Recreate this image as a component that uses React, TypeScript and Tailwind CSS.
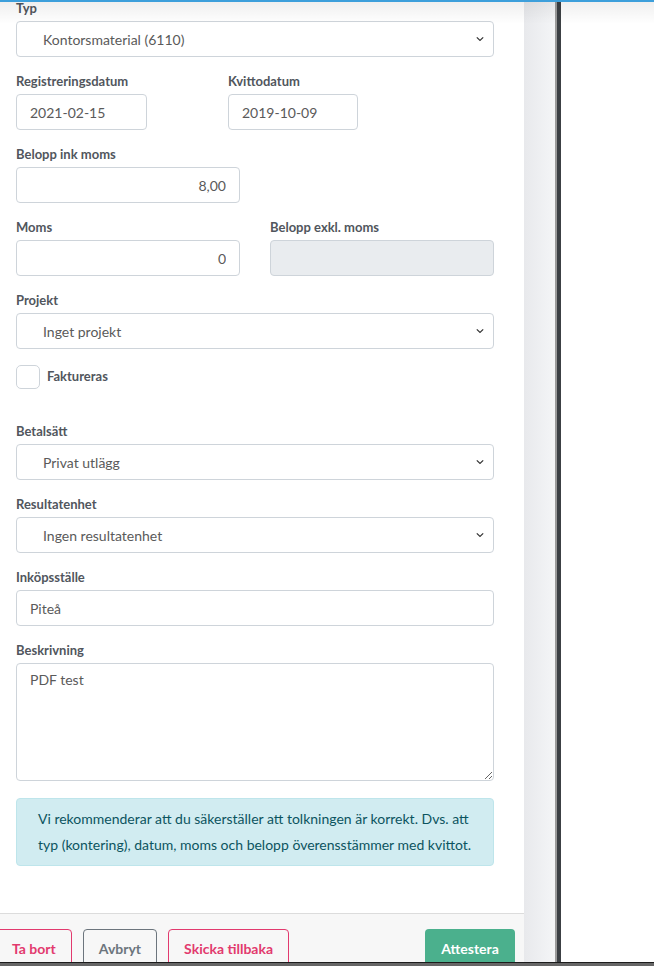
import { useState } from "react";

const FIELD =
  "h-[36px] w-full rounded-[4px] border border-[#ced4da] bg-white text-[14px] text-[#5a5a5a] outline-none";

function Label({ children }: { children: React.ReactNode }) {
  return (
    <div className="mb-[4px] text-[13px] font-bold leading-[17px] text-[#51565d]">
      {children}
    </div>
  );
}

function Chevron() {
  return (
    <svg
      width="8"
      height="5"
      viewBox="0 0 8 5"
      className="pointer-events-none absolute right-[10px] top-1/2 -translate-y-1/2"
    >
      <path d="M0.8 0.8 L4 4 L7.2 0.8" fill="none" stroke="#333" strokeWidth="1.2" />
    </svg>
  );
}

function Select({ value }: { value: string }) {
  return (
    <div className="relative">
      <select
        defaultValue={value}
        className={`${FIELD} appearance-none pl-[26px] pr-[30px]`}
      >
        <option>{value}</option>
      </select>
      <Chevron />
    </div>
  );
}

function Group({
  label,
  children,
  className = "mb-[16px]",
}: {
  label: string;
  children: React.ReactNode;
  className?: string;
}) {
  return (
    <div className={className}>
      <Label>{label}</Label>
      {children}
    </div>
  );
}

export default function App() {
  const [billed, setBilled] = useState(false);

  return (
    <div className="relative flex h-[966px] w-[654px] flex-col overflow-hidden bg-white font-['Lato',sans-serif]">
      <div className="flex min-h-0 flex-1">
        {/* left panel */}
        <div className="flex w-[524px] flex-col bg-white">
          <div className="flex-1 overflow-hidden px-[16px]">
            <div className="w-[478px]">
              <Group label="Typ">
                <Select value="Kontorsmaterial (6110)" />
              </Group>

              <div className="flex">
                <Group label="Registreringsdatum" className="mb-[16px] w-[212px]">
                  <input
                    defaultValue="2021-02-15"
                    className={`${FIELD} !w-[131px] px-[13px]`}
                  />
                </Group>
                <Group label="Kvittodatum" className="mb-[16px]">
                  <input
                    defaultValue="2019-10-09"
                    className={`${FIELD} !w-[130px] px-[13px]`}
                  />
                </Group>
              </div>

              <Group label="Belopp ink moms" className="mb-[16px] w-[224px]">
                <input defaultValue="8,00" className={`${FIELD} px-[13px] text-right`} />
              </Group>

              <div className="flex gap-[30px]">
                <Group label="Moms" className="mb-[16px] w-[224px]">
                  <input defaultValue="0" className={`${FIELD} px-[13px] text-right`} />
                </Group>
                <Group label="Belopp exkl. moms" className="mb-[16px] w-[224px]">
                  <input disabled className={`${FIELD} !bg-[#e9ecef] px-[13px]`} />
                </Group>
              </div>

              <Group label="Projekt">
                <Select value="Inget projekt" />
              </Group>

              <label className="mb-[34px] flex h-[24px] cursor-pointer items-center gap-[7px]">
                <button
                  type="button"
                  onClick={() => setBilled(!billed)}
                  className="h-[24px] w-[24px] rounded-[5px] border border-[#ced4da] bg-white"
                >
                  {billed && (
                    <svg viewBox="0 0 24 24" className="h-full w-full">
                      <path d="M6 12l4 4 8-8" fill="none" stroke="#4bb08d" strokeWidth="2.5" />
                    </svg>
                  )}
                </button>
                <span className="text-[13px] font-bold text-[#51565d]">Faktureras</span>
              </label>

              <Group label="Betalsätt">
                <Select value="Privat utlägg" />
              </Group>

              <Group label="Resultatenhet">
                <Select value="Ingen resultatenhet" />
              </Group>

              <Group label="Inköpsställe">
                <input defaultValue="Piteå" className={`${FIELD} px-[13px]`} />
              </Group>

              <Group label="Beskrivning" className="mb-[17px]">
                <textarea
                  defaultValue="PDF test"
                  className="block h-[118px] w-full rounded-[4px] border border-[#ced4da] bg-white px-[13px] py-[6px] text-[14px] leading-[20px] text-[#5a5a5a] outline-none"
                />
              </Group>

              <div className="rounded-[4px] border border-[#bee5eb] bg-[#d1ecf1] px-[21px] py-[7px] text-[14px] leading-[26px] text-[#0c5460]">
                Vi rekommenderar att du säkerställer att tolkningen är korrekt. Dvs. att
                <br />
                typ (kontering), datum, moms och belopp överensstämmer med kvittot.
              </div>
            </div>
          </div>

          {/* footer */}
          <div className="flex h-[49px] items-start border-t border-[#dcdcdc] bg-[#f7f7f7] pt-[15px] pr-[9px]">
            <div className="flex gap-[11px]">
              <button className="-ml-[4px] h-[38px] rounded-[4px] border border-[#e23a6e] px-[15px] text-[14px] font-bold text-[#e23a6e]">
                Ta bort
              </button>
              <button className="h-[38px] rounded-[4px] border border-[#6c757d] px-[15px] text-[14px] font-bold text-[#6c757d]">
                Avbryt
              </button>
              <button className="h-[38px] rounded-[4px] border border-[#e23a6e] px-[15px] text-[14px] font-bold text-[#e23a6e]">
                Skicka tillbaka
              </button>
            </div>
            <button className="ml-auto h-[38px] w-[90px] rounded-[4px] bg-[#4bb08d] text-[14px] font-bold text-white">
              Attestera
            </button>
          </div>
        </div>

        {/* gutter */}
        <div className="w-[31px] bg-gradient-to-r from-[#e8e9ec] to-[#f4f5f7]" />
        <div className="w-[6px] border-l-2 border-[#9b9b9b] bg-[#3c4044]" />
        <div className="flex-1 bg-white" />
      </div>

      {/* bottom edge */}
      <div className="h-[4px] border-t border-[#1c1c1c] bg-[#666]" />

      {/* top bar and its shadow */}
      <div className="pointer-events-none absolute inset-x-0 top-0 h-[2px] bg-[#3d9fdb]" />
      <div className="pointer-events-none absolute inset-x-0 top-[2px] h-[22px] bg-gradient-to-b from-[#00000010] to-transparent" />
    </div>
  );
}
